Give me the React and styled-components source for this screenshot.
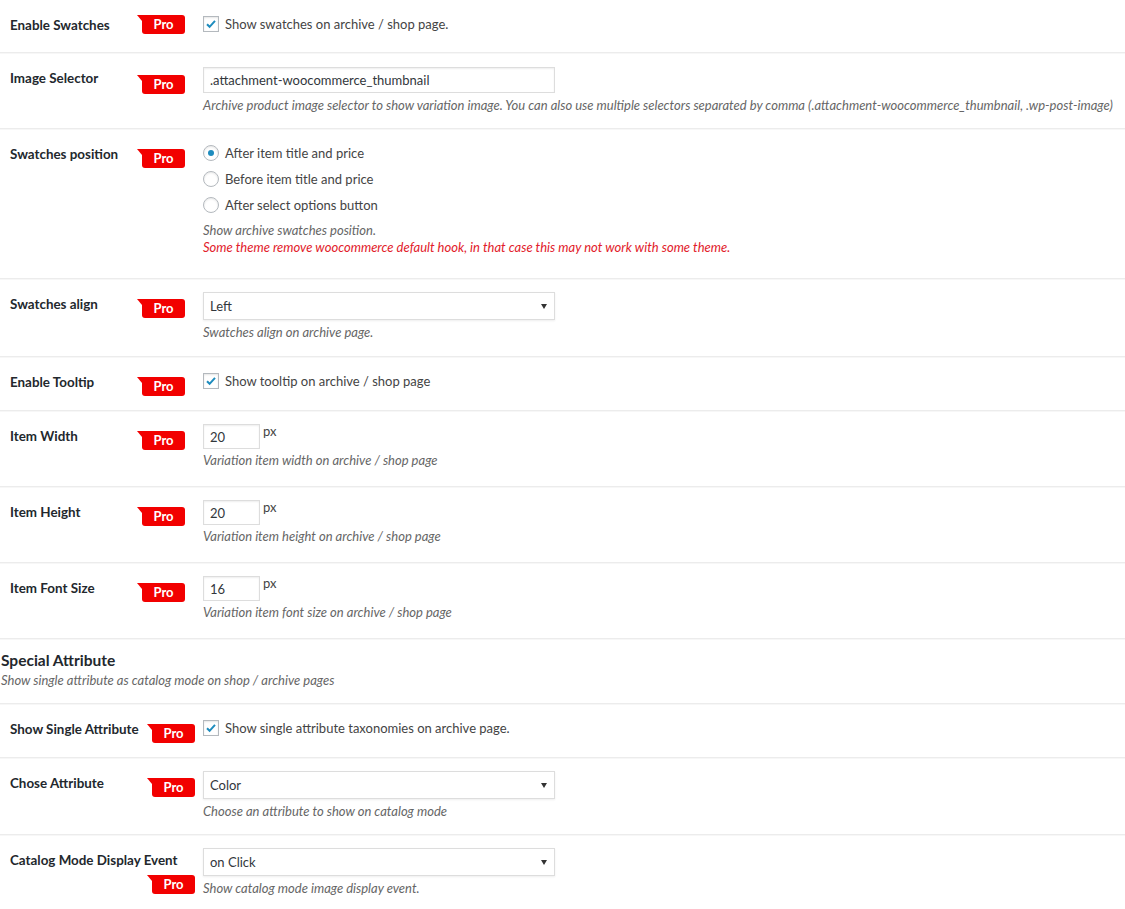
import React from 'react'
import styled, { createGlobalStyle } from 'styled-components'

const GlobalStyle = createGlobalStyle`
  body {
    margin: 0;
    background: #fff;
    font-family: Lato, "Liberation Sans", sans-serif;
    font-size: 13px;
    color: #444;
  }
`

const Page = styled.div`
  width: 1125px;
  min-height: 909px;
`

const Row = styled.div`
  display: flex;
  border-bottom: 1px solid #ececec;
  box-shadow: 0 1px 0 #f7f7f7;
  min-height: ${p => p.h}px;
  box-sizing: border-box;
`

const Th = styled.div`
  width: 203px;
  flex: none;
  box-sizing: border-box;
  padding: 15px ${p => (p.wide ? 8 : 18)}px 0 10px;
`

const Label = styled.span`
  font-weight: 700;
  font-size: 13.4px;
  line-height: 20px;
  color: #23282d;
`

const Pro = styled.span`
  float: right;
  position: relative;
  margin-top: ${p => p.top ?? 5}px;
  width: 43px;
  height: 19px;
  background: #f20000;
  border-radius: 0 3px 3px 3px;
  color: #fff;
  font-weight: 700;
  font-size: 13px;
  line-height: 19px;
  text-align: center;

  &::before {
    content: '';
    position: absolute;
    left: -5px;
    top: 0;
    border-top: 6px solid #f20000;
    border-left: 5px solid transparent;
  }
`

const Td = styled.div`
  flex: 1;
  padding: ${p => p.pt || 14}px 0 ${p => p.pb || 14}px 0;
`

const Line = styled.label`
  display: flex;
  align-items: center;
  gap: 6px;
  height: 20px;
  margin-bottom: ${p => p.mb || 0}px;
  color: #444;
`

const Check = styled.span`
  width: 14px;
  height: 14px;
  border: 1px solid #b4b9be;
  background: #fff;
  box-shadow: inset 0 1px 2px rgba(0, 0, 0, 0.1);
  display: flex;
  align-items: center;
  justify-content: center;
`

const Radio = styled.span`
  width: 14px;
  height: 14px;
  border: 1px solid #b4b9be;
  border-radius: 50%;
  background: #fff;
  box-shadow: inset 0 1px 2px rgba(0, 0, 0, 0.1);
  display: flex;
  align-items: center;
  justify-content: center;

  &::after {
    content: '';
    display: ${p => (p.on ? 'block' : 'none')};
    width: 6px;
    height: 6px;
    border-radius: 50%;
    background: #1e8cbe;
  }
`

const TextInput = styled.div`
  width: ${p => p.w}px;
  height: ${p => p.h || 25}px;
  box-sizing: border-box;
  border: 1px solid #ddd;
  box-shadow: inset 0 1px 2px rgba(0, 0, 0, 0.07);
  padding: 0 6px;
  display: flex;
  align-items: center;
  color: #32373c;
`

const NumberRow = styled.div`
  display: flex;
  align-items: flex-start;
  gap: 3px;
`

const Unit = styled.span`
  font-size: 13px;
  line-height: 14px;
  color: #444;
`

const Select = styled.div`
  width: 352px;
  height: 28px;
  box-sizing: border-box;
  border: 1px solid #ddd;
  box-shadow: 0 1px 2px rgba(0, 0, 0, 0.07);
  padding: 0 7px 0 6px;
  display: flex;
  align-items: center;
  justify-content: space-between;
  color: #32373c;

  &::after {
    content: '';
    border-top: 5px solid #333;
    border-left: 3px solid transparent;
    border-right: 3px solid transparent;
  }
`

const Desc = styled.p`
  margin: ${p => p.mt ?? 4}px 0 0;
  font-style: italic;
  line-height: 17px;
  color: ${p => (p.warn ? '#e2202a' : '#666')};
`

const Section = styled.div`
  padding: 11px 0 14px 1px;
  border-bottom: 1px solid #ececec;
  box-shadow: 0 1px 0 #f7f7f7;
`

const Heading = styled.h2`
  margin: 0;
  font-size: 15.5px;
  line-height: 20px;
  font-weight: 700;
  color: #23282d;
`

const Tick = () => (
  <svg width="12" height="12" viewBox="0 0 12 12">
    <path d="M2 6.2l2.6 2.6L10 2.8" fill="none" stroke="#1e8cbe" strokeWidth="2" />
  </svg>
)

const Field = ({ label, wide, proTop, h, pt, pb, children }) => (
  <Row h={h}>
    <Th wide={wide}>
      <Label>{label}</Label>
      <Pro top={proTop}>Pro</Pro>
    </Th>
    <Td pt={pt} pb={pb}>{children}</Td>
  </Row>
)

const CheckLine = ({ children }) => (
  <Line>
    <Check><Tick /></Check>
    {children}
  </Line>
)

const NumberField = ({ label, value, desc }) => (
  <Field label={label} h={76} pt={13}>
    <NumberRow>
      <TextInput w={57} h={25}>{value}</TextInput>
      <Unit>px</Unit>
    </NumberRow>
    <Desc mt={3}>{desc}</Desc>
  </Field>
)

const App = () => {
  return (
    <Page>
      <GlobalStyle />
      <Field label="Enable Swatches" h={53} pt={14} proTop={0}>
        <CheckLine>Show swatches on archive / shop page.</CheckLine>
      </Field>
      <Field label="Image Selector" h={76} proTop={7}>
        <TextInput w={352} h={26}>.attachment-woocommerce_thumbnail</TextInput>
        <Desc>
          Archive product image selector to show variation image. You can also use multiple selectors
          separated by comma (.attachment-woocommerce_thumbnail, .wp-post-image)
        </Desc>
      </Field>
      <Field label="Swatches position" h={150}>
        <Line mb={6}><Radio on />After item title and price</Line>
        <Line mb={6}><Radio />Before item title and price</Line>
        <Line><Radio />After select options button</Line>
        <Desc mt={7}>Show archive swatches position.</Desc>
        <Desc mt={0} warn>
          Some theme remove woocommerce default hook, in that case this may not work with some theme.
        </Desc>
      </Field>
      <Field label="Swatches align" h={78} pt={13}>
        <Select>Left</Select>
        <Desc>Swatches align on archive page.</Desc>
      </Field>
      <Field label="Enable Tooltip" h={54}>
        <CheckLine>Show tooltip on archive / shop page</CheckLine>
      </Field>
      <NumberField label="Item Width" value="20" desc="Variation item width on archive / shop page" />
      <NumberField label="Item Height" value="20" desc="Variation item height on archive / shop page" />
      <NumberField label="Item Font Size" value="16" desc="Variation item font size on archive / shop page" />
      <Section>
        <Heading>Special Attribute</Heading>
        <Desc mt={2}>Show single attribute as catalog mode on shop / archive pages</Desc>
      </Section>
      <Field label="Show Single Attribute" wide h={54}>
        <CheckLine>Show single attribute taxonomies on archive page.</CheckLine>
      </Field>
      <Field label="Chose Attribute" wide h={77} pt={13}>
        <Select>Color</Select>
        <Desc>Choose an attribute to show on catalog mode</Desc>
      </Field>
      <Field label="Catalog Mode Display Event" wide h={74} pt={13}>
        <Select>on Click</Select>
        <Desc>Show catalog mode image display event.</Desc>
      </Field>
    </Page>
  )
}

export default App
